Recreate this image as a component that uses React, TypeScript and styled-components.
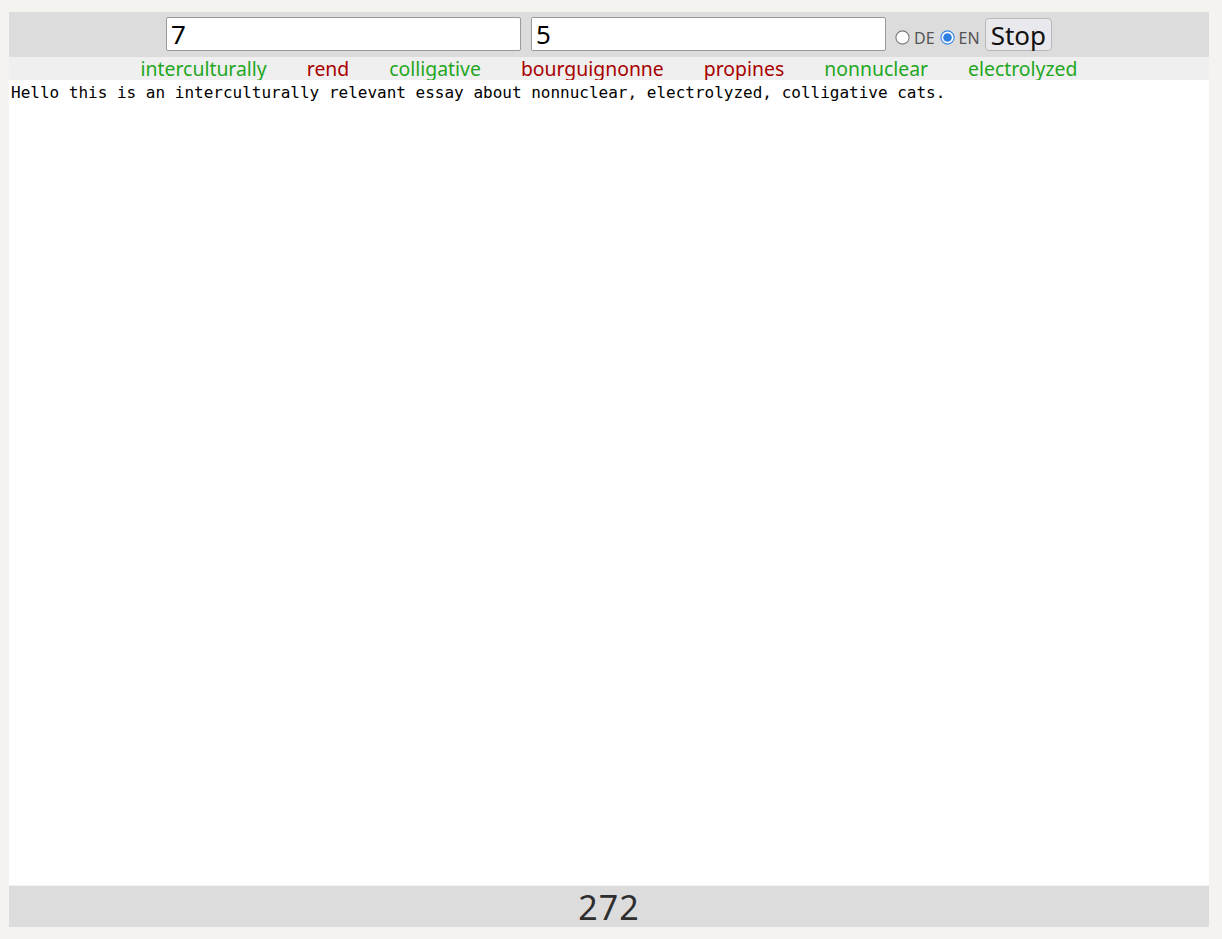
import React, { useState } from "react";
import styled, { createGlobalStyle } from "styled-components";

const Global = createGlobalStyle`
  html, body { margin: 0; padding: 0; background: #f4f3ef; }
  body { padding: 12px 13px 12px 9px; box-sizing: border-box; height: 100vh; overflow: hidden; }
  #root { height: 100%; }
`;

const Frame = styled.div`
  width: 1200px;
  height: 100%;
  display: flex;
  flex-direction: column;
  font-family: "Noto Sans", "DejaVu Sans", sans-serif;
`;

const Toolbar = styled.div`
  height: 45px;
  background: #dcdcdc;
  display: flex;
  align-items: center;
  justify-content: center;
  gap: 10px;
`;

const NumberInput = styled.input`
  box-sizing: border-box;
  width: 355px;
  height: 34px;
  margin-top: -1px;
  border: 1px solid #9a9a9a;
  border-radius: 2px;
  background: #fff;
  font-family: "Noto Sans", sans-serif;
  font-size: 26px;
  padding: 0 4px;
  color: #000;
  outline: none;
`;

const RadioGroup = styled.div`
  display: flex;
  align-items: center;
  color: #555;
  font-size: 16px;
  margin-top: 6px;
`;

const Radio = styled.input`
  width: 13px;
  height: 13px;
  margin: 0 5px 0 0;
  accent-color: #2f7fe0;
  transform: scale(1.1);
`;

const RadioLabel = styled.label`
  display: flex;
  align-items: center;
  margin-right: 6px;
`;

const StopButton = styled.button`
  box-sizing: border-box;
  height: 33px;
  margin-left: -11px;
  padding: 0 5px;
  border: 1px solid #b8b8b8;
  border-radius: 4px;
  background: #e9e9ed;
  font-family: "Noto Sans", sans-serif;
  font-size: 26px;
  line-height: 1;
  color: #111;
`;

const WordRow = styled.div`
  height: 23px;
  background: #efefef;
  display: flex;
  justify-content: center;
  align-items: center;
  gap: 40px;
  font-size: 19.4px;
`;

const Word = styled.span<{ $ok: boolean }>`
  color: ${(p) => (p.$ok ? "#1fa71f" : "#a80000")};
  line-height: 23px;
`;

const Essay = styled.div`
  flex: 1;
  background: #fff;
  padding: 3px 2px;
  font-family: "DejaVu Sans Mono", monospace;
  font-size: 16px;
  line-height: 20px;
  color: #000;
  white-space: pre-wrap;
`;

const Footer = styled.div`
  height: 41px;
  margin-top: 1px;
  background: #dcdcdc;
  display: flex;
  align-items: center;
  justify-content: center;
  font-size: 34px;
  color: #2e2e2e;
  letter-spacing: 1px;
`;

const words: [string, boolean][] = [
  ["interculturally", true],
  ["rend", false],
  ["colligative", true],
  ["bourguignonne", false],
  ["propines", false],
  ["nonnuclear", true],
  ["electrolyzed", true],
];

export default function App() {
  const [lang, setLang] = useState("EN");
  return (
    <>
      <Global />
      <Frame>
        <Toolbar>
          <NumberInput defaultValue="7" />
          <NumberInput defaultValue="5" />
          <RadioGroup>
            <RadioLabel>
              <Radio type="radio" name="lang" checked={lang === "DE"} onChange={() => setLang("DE")} />
              DE
            </RadioLabel>
            <RadioLabel>
              <Radio type="radio" name="lang" checked={lang === "EN"} onChange={() => setLang("EN")} />
              EN
            </RadioLabel>
          </RadioGroup>
          <StopButton>Stop</StopButton>
        </Toolbar>
        <WordRow>
          {words.map(([w, ok]) => (
            <Word key={w} $ok={ok}>{w}</Word>
          ))}
        </WordRow>
        <Essay>Hello this is an interculturally relevant essay about nonnuclear, electrolyzed, colligative cats.</Essay>
        <Footer>272</Footer>
      </Frame>
    </>
  );
}
